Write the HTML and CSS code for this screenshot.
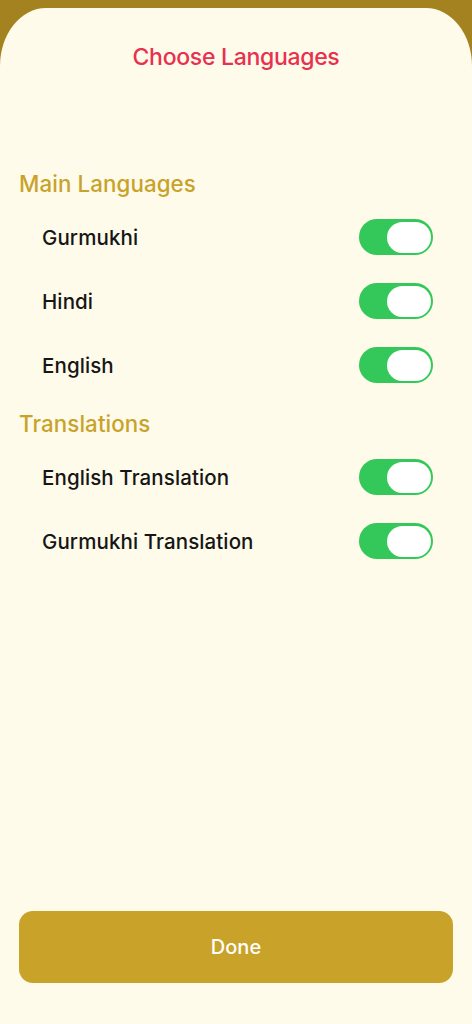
FILE: index.html
```html
<!DOCTYPE html>
<html lang="en">
<head>
<meta charset="utf-8">
<title>Choose Languages</title>
<link rel="stylesheet" href="styles.css">
</head>
<body>
<div class="sheet">
  <h1 class="title">Choose Languages</h1>
  <section class="section first">
    <h2 class="section-title">Main Languages</h2>
    <div class="row"><span class="label">Gurmukhi</span><span class="toggle"><span class="knob"></span></span></div>
    <div class="row"><span class="label">Hindi</span><span class="toggle"><span class="knob"></span></span></div>
    <div class="row"><span class="label">English</span><span class="toggle"><span class="knob"></span></span></div>
  </section>
  <section class="section">
    <h2 class="section-title">Translations</h2>
    <div class="row"><span class="label">English Translation</span><span class="toggle"><span class="knob"></span></span></div>
    <div class="row"><span class="label">Gurmukhi Translation</span><span class="toggle"><span class="knob"></span></span></div>
  </section>
  <div class="spacer"></div>
  <button class="done">Done</button>
</div>
</body>
</html>
```
FILE: styles.css
```css
html, body {
  margin: 0;
  padding: 0;
  height: 100%;
}
body {
  background: #a3821f;
  font-family: Inter, "Noto Sans", "Liberation Sans", sans-serif;
  padding-top: 8px;
  box-sizing: border-box;
}
.sheet {
  background: #fefbea;
  border-top-left-radius: 46px 58px;
  border-top-right-radius: 46px 58px;
  height: 1016px;
  display: flex;
  flex-direction: column;
  box-sizing: border-box;
  padding-top: 34px;
}
.title {
  margin: 0;
  text-align: center;
  font-size: 23px;
  font-weight: 500;
  line-height: 30px;
  color: #e8304f;
  letter-spacing: -0.3px;
}
.section.first {
  margin-top: 97px;
}
.section {
  margin-top: 12px;
}
.section-title {
  margin: 0 0 6px 0;
  padding-left: 19px;
  font-size: 22.3px;
  font-weight: 500;
  line-height: 30px;
  color: #c9a22a;
  letter-spacing: 0.1px;
}
.row {
  height: 64px;
  display: flex;
  align-items: center;
  justify-content: space-between;
  padding: 0 39px 0 42px;
}
.label {
  font-size: 20.5px;
  font-weight: 500;
  color: #161616;
  letter-spacing: 0.1px;
}
.toggle {
  width: 74px;
  height: 36px;
  border-radius: 18px;
  background: #34c759;
  display: flex;
  align-items: center;
  justify-content: flex-end;
  padding: 0 2px;
  box-sizing: border-box;
}
.knob {
  width: 44px;
  height: 31px;
  border-radius: 16px;
  background: #ffffff;
}
.spacer {
  flex: 1;
}
.done {
  margin: 0 19px 41px 19px;
  height: 72px;
  border: none;
  border-radius: 14px;
  background: #c9a22a;
  color: #ffffff;
  font-family: Inter, "Noto Sans", "Liberation Sans", sans-serif;
  font-size: 20px;
  font-weight: 500;
}
```
